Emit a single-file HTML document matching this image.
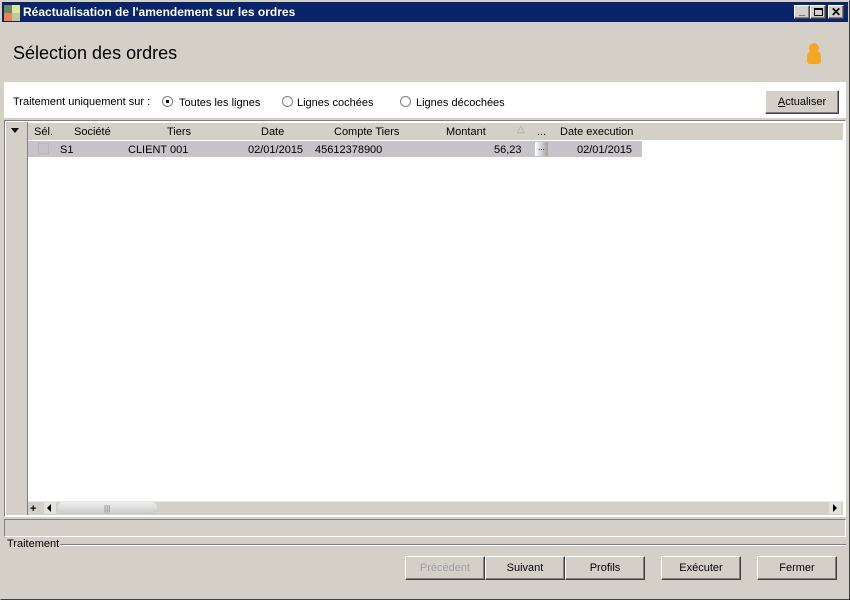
<!DOCTYPE html><html><head><meta charset="utf-8"><style>
*{box-sizing:border-box;margin:0;padding:0}
body{width:850px;height:600px;background:#d4d0c8;font-family:"Liberation Sans",sans-serif;font-size:11px;color:#000;position:relative;overflow:hidden}
.a{position:absolute}
.btn{position:absolute;background:#d4d0c8;border:1px solid;border-color:#fff #404040 #404040 #fff;box-shadow:inset -1px -1px 0 #808080;text-align:center;font-size:11px}
.radio{position:absolute;width:11px;height:11px;border-radius:50%;background:#fff;border:1px solid #808080}
</style></head><body>
<div class="a" style="left:0;top:0;width:850px;height:600px;border:1px solid;border-color:#d4d0c8 #404040 #404040 #d4d0c8"></div>
<div class="a" style="left:2px;top:2px;width:846px;height:20px;background:#0a246a"></div>
<div class="a" style="left:4px;top:5px;width:8px;height:8px;background:#6a8a5a"></div>
<div class="a" style="left:12px;top:5px;width:8px;height:8px;background:#d8e8a0"></div>
<div class="a" style="left:4px;top:13px;width:8px;height:8px;background:#f08050"></div>
<div class="a" style="left:12px;top:13px;width:8px;height:8px;background:#c0c8a0"></div>
<div class="a" style="left:23px;top:5px;color:#fff;font-weight:bold;font-size:12px">Réactualisation de l'amendement sur les ordres</div>
<div class="btn" style="left:794px;top:5px;width:16px;height:14px;line-height:10px;font-weight:bold">_</div>
<div class="btn" style="left:810px;top:5px;width:16px;height:14px"><div class="a" style="left:3px;top:2px;width:9px;height:8px;border:1px solid #000;border-top-width:2px"></div></div>
<div class="btn" style="left:828px;top:5px;width:16px;height:14px;line-height:12px;font-weight:bold;font-size:12px">✕</div>
<div class="a" style="left:13px;top:43px;font-size:18px">Sélection des ordres</div>
<div class="a" style="left:809px;top:43px;width:10px;height:10px;border-radius:50%;background:#f5a623"></div>
<div class="a" style="left:807px;top:51px;width:14px;height:13px;border-radius:5px 5px 3px 3px;background:#f5a623"></div>
<div class="a" style="left:4px;top:82px;width:842px;height:36px;background:#fff"></div>
<div class="a" style="left:13px;top:96px">Traitement uniquement sur :</div>
<div class="radio" style="left:162px;top:96px"><div class="a" style="left:3px;top:3px;width:3px;height:3px;background:#000"></div></div>
<div class="a" style="left:179px;top:97px">Toutes les lignes</div>
<div class="radio" style="left:282px;top:96px"></div>
<div class="a" style="left:297px;top:97px">Lignes cochées</div>
<div class="radio" style="left:400px;top:96px"></div>
<div class="a" style="left:416px;top:97px">Lignes décochées</div>
<div class="btn" style="left:765px;top:90px;width:74px;height:24px;line-height:22px"><u>A</u>ctualiser</div>
<div class="a" style="left:4px;top:120px;width:842px;height:397px;border:1px solid;border-color:#808080 #fff #fff #808080;background:#fff"></div>
<div class="a" style="left:6px;top:122px;width:22px;height:393px;background:#d4d0c8;border-right:1px solid #808080"></div>
<div class="a" style="left:11px;top:128px;border:4px solid transparent;border-top:5px solid #000"></div>
<div class="a" style="left:28px;top:123px;width:815px;height:17px;background:#d4d0c8"></div>
<div class="a" style="left:34px;top:126px">Sél.</div>
<div class="a" style="left:74px;top:126px">Société</div>
<div class="a" style="left:167px;top:126px">Tiers</div>
<div class="a" style="left:261px;top:126px">Date</div>
<div class="a" style="left:334px;top:126px">Compte Tiers</div>
<div class="a" style="left:446px;top:126px">Montant</div>
<div class="a" style="left:517px;top:124px;color:#a0a0a0;font-size:10px">△</div>
<div class="a" style="left:537px;top:126px">...</div>
<div class="a" style="left:560px;top:126px">Date execution</div>
<div class="a" style="left:28px;top:141px;width:614px;height:16px;background:#c6c4ca"></div>
<div class="a" style="left:38px;top:143px;width:11px;height:11px;border:1px solid #b8b8b8"></div>
<div class="a" style="left:60px;top:144px">S1</div>
<div class="a" style="left:128px;top:144px">CLIENT 001</div>
<div class="a" style="left:248px;top:144px">02/01/2015</div>
<div class="a" style="left:315px;top:144px">45612378900</div>
<div class="a" style="left:494px;top:144px">56,23</div>
<div class="a" style="left:535px;top:142px;width:13px;height:14px;background:linear-gradient(90deg,#fff,#a0a0a0);font-size:8px;line-height:12px;text-align:center">...</div>
<div class="a" style="left:577px;top:144px">02/01/2015</div>
<div class="a" style="left:28px;top:501px;width:815px;height:14px;background:#d4d0c8;border-top:1px solid #e8e8e8"></div>
<div class="a" style="left:30px;top:503px;font-weight:bold">+</div>
<div class="a" style="left:44px;top:502px;width:12px;height:12px;background:#e4e2de"></div>
<div class="a" style="left:47px;top:504px;border:4px solid transparent;border-right:4px solid #000;border-left:0"></div>
<div class="a" style="left:58px;top:502px;width:99px;height:12px;border-radius:5px;background:linear-gradient(#f0f0f0,#c8c8c8)"></div>
<div class="a" style="left:104px;top:504px;font-size:8px;color:#777">|||</div>
<div class="a" style="left:829px;top:502px;width:12px;height:12px;background:#e4e2de"></div>
<div class="a" style="left:833px;top:504px;border:4px solid transparent;border-left:4px solid #000;border-right:0"></div>
<div class="a" style="left:4px;top:519px;width:842px;height:18px;border:1px solid;border-color:#808080 #fff #fff #808080"></div>
<div class="a" style="left:7px;top:538px">Traitement</div>
<div class="a" style="left:60px;top:544px;width:786px;height:2px;border-top:1px solid #808080;border-bottom:1px solid #fff"></div>
<div class="btn" style="left:405px;top:556px;width:80px;height:24px;line-height:22px;color:#a0a0a0">Précédent</div>
<div class="btn" style="left:485px;top:556px;width:80px;height:24px;line-height:22px">Suivant</div>
<div class="btn" style="left:565px;top:556px;width:80px;height:24px;line-height:22px">Profils</div>
<div class="btn" style="left:661px;top:556px;width:80px;height:24px;line-height:22px">Exécuter</div>
<div class="btn" style="left:757px;top:556px;width:80px;height:24px;line-height:22px">Fermer</div>
</body></html>
